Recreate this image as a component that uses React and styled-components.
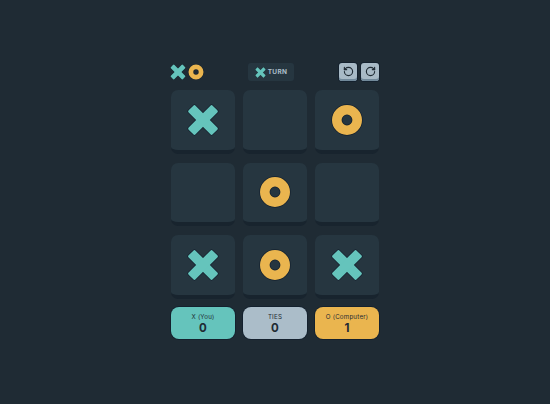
import React from 'react'
import { styled, createGlobalStyle } from 'styled-components'
import { RotateCcw, RotateCw } from 'lucide-react'

const GlobalStyle = createGlobalStyle`
  html, body { margin: 0; padding: 0; height: 100%; background: #1f2b34; }
  body { font-family: "Inter", "Open Sans", sans-serif; }
`

const board = ['x', '', 'o', '', 'o', '', 'x', 'o', 'x']

function Cross({ size, outline }) {
  const arm = { x: -1, y: 11.1, width: 34, height: 9.8, rx: 1.6 }
  return (
    <svg width={size} height={size} viewBox="0 0 32 32">
      <g stroke={outline} strokeWidth="1.4">
        <rect {...arm} transform="rotate(45 16 16)" />
        <rect {...arm} transform="rotate(-45 16 16)" />
      </g>
      <g fill="#65c4bc">
        <rect {...arm} transform="rotate(45 16 16)" />
        <rect {...arm} transform="rotate(-45 16 16)" />
      </g>
    </svg>
  )
}

function Ring({ size, outline }) {
  return (
    <svg width={size} height={size} viewBox="0 0 32 32">
      <circle cx="16" cy="16" r="10.2" fill="none" stroke={outline} strokeWidth="11" />
      <circle cx="16" cy="16" r="10.2" fill="none" stroke="#eab54f" strokeWidth="9.600" />
    </svg>
  )
}

function App() {
  return (
    <>
      <GlobalStyle />
      <Page>
        <Game>
          <Header>
            <Logo>
              <Cross size={16} outline="#14212e" />
              <Ring size={16} outline="#14212e" />
            </Logo>
            <TurnBadge>
              <Cross size={11} outline="#263640" />
              <TurnLabel>TURN</TurnLabel>
            </TurnBadge>
            <Actions>
              <IconButton aria-label="Undo"><RotateCcw size={11} strokeWidth={2.5} /></IconButton>
              <IconButton aria-label="Redo"><RotateCw size={11} strokeWidth={2.5} /></IconButton>
            </Actions>
          </Header>
          <Board>
            {board.map((mark, i) => (
              <Cell key={i}>
                {mark === 'x' && <Cross size={32} outline="#14212e" />}
                {mark === 'o' && <Ring size={32} outline="#14212e" />}
              </Cell>
            ))}
          </Board>
          <Scores>
            <Score $bg="#65c4bc">
              <ScoreLabel>X (You)</ScoreLabel>
              <ScoreValue>0</ScoreValue>
            </Score>
            <Score $bg="#abbdc9">
              <ScoreLabel>TIES</ScoreLabel>
              <ScoreValue>0</ScoreValue>
            </Score>
            <Score $bg="#eab54f">
              <ScoreLabel>O (Computer)</ScoreLabel>
              <ScoreValue>1</ScoreValue>
            </Score>
          </Scores>
        </Game>
      </Page>
    </>
  )
}

export default App

const Page = styled.div`
  height: 404px;
  display: flex;
  justify-content: center;
  padding-top: 63px;
  box-sizing: border-box;
  overflow: hidden;
`

const Game = styled.div`
  width: 208px;
  display: flex;
  flex-direction: column;
`

const Header = styled.div`
  height: 18px;
  display: flex;
  justify-content: space-between;
  align-items: center;
  margin-bottom: 9px;
`

const Logo = styled.div`
  display: flex;
  align-items: center;
  gap: 2px;
  margin: 0 -1px;
`

const TurnBadge = styled.div`
  width: 46px;
  height: 18px;
  border-radius: 3px;
  background: #263640;
  display: flex;
  align-items: center;
  justify-content: center;
  gap: 2px;
`

const TurnLabel = styled.span`
  font-size: 6.500px;
  font-weight: 700;
  letter-spacing: 0.3px;
  color: #abbdc9;
`

const Actions = styled.div`
  display: flex;
  gap: 4px;
`

const IconButton = styled.button`
  width: 18px;
  height: 18px;
  padding: 0 0 1px;
  border: 0;
  border-radius: 3px;
  background: #a8bac6;
  box-shadow: inset 0 -2px 0 #71899a, 0 0 0 1px #14212e;
  color: #1f2b34;
  display: flex;
  align-items: center;
  justify-content: center;
`

const Board = styled.div`
  display: grid;
  grid-template-columns: repeat(3, 64px);
  grid-auto-rows: 63.5px;
  gap: 9px 8px;
`

const Cell = styled.div`
  box-sizing: border-box;
  border-radius: 7px;
  background: #263640;
  border-bottom: 4px solid #18242e;
  display: flex;
  align-items: center;
  justify-content: center;
`

const Scores = styled.div`
  margin-top: 8.500px;
  display: grid;
  grid-template-columns: repeat(3, 64px);
  gap: 8px;
`

const Score = styled.div`
  height: 32px;
  border-radius: 8px;
  background: ${(props) => props.$bg};
  box-shadow: 0 0 0 1px #14212e;
  display: flex;
  flex-direction: column;
  align-items: center;
  justify-content: center;
  color: #1f2b34;
`

const ScoreLabel = styled.span`
  font-size: 6.200px;
  line-height: 10px;
  letter-spacing: 0.2px;
`

const ScoreValue = styled.span`
  font-size: 11.500px;
  line-height: 13px;
  font-weight: 700;
`
